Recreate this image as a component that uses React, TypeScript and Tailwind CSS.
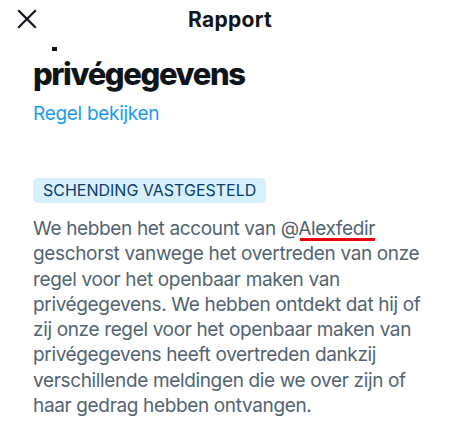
import React from "react";

const FONT = "font-['Inter','Noto_Sans',sans-serif]";

function CloseIcon() {
  return (
    <svg width="20" height="20" viewBox="0 0 20 20" fill="none" stroke="#0f1419" strokeWidth="2.2" strokeLinecap="square">
      <path d="M2 2 L18 18 M18 2 L2 18" />
    </svg>
  );
}

export default function App() {
  return (
    <div className={`w-[460px] h-[438px] overflow-hidden bg-white ${FONT}`}>
      {/* Top bar */}
      <div className="relative flex h-[47px] items-center">
        <div className="ml-[17px] mt-[-9px]">
          <CloseIcon />
        </div>
        <div className="absolute left-0 right-0 top-[6px] text-center text-[21px] font-bold leading-[28px] tracking-[0.3px] text-[#0f1419]">
          Rapport
        </div>
      </div>

      {/* remnant of the scrolled line */}
      <div className="ml-[52px] h-[4px] w-[5px] bg-[#0f1419]" />

      <div className="px-[33px]">
        <h1 className="mt-[5px] text-[31px] font-extrabold leading-[36px] tracking-[-1.4px] text-[#0f1419]">
          privégegevens
        </h1>
        <a className="mt-[10px] block text-[19px] leading-[24px] tracking-[-0.3px] text-[#1d9bf0]">Regel bekijken</a>

        <div className="mt-[52px] inline-block rounded-[5px] bg-[#d6f1fc] px-[10px] text-[16px] leading-[25px] text-[#0d3c6e]">
          SCHENDING VASTGESTELD
        </div>

        <p className="mt-[13px] text-[19px] leading-[25.3px] tracking-[-0.35px] text-[#536471]">
          We hebben het account van @
          <span className="relative">
            Alexfedir
            <span className="absolute left-[2px] right-0 bottom-[-1px] h-[3px] bg-[#e8000b]" />
          </span>{" "}
          geschorst vanwege het overtreden van onze regel voor het openbaar maken van privégegevens. We hebben
          ontdekt dat hij of zij onze regel voor het openbaar maken van privégegevens heeft overtreden dankzij
          verschillende meldingen die we over zijn of haar gedrag hebben ontvangen.
        </p>
      </div>
    </div>
  );
}
